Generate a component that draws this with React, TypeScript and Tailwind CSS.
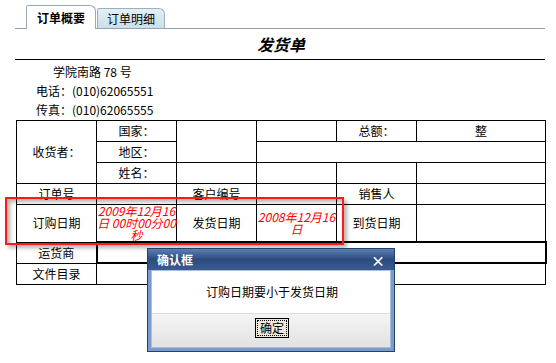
import React from "react";

const font = "font-['SimSun','Noto_Sans_CJK_SC',sans-serif]";

const Cell = ({
  children,
  className = "",
  colSpan,
  rowSpan,
}: {
  children?: React.ReactNode;
  className?: string;
  colSpan?: number;
  rowSpan?: number;
}) => (
  <td
    colSpan={colSpan}
    rowSpan={rowSpan}
    className={`border border-black text-center align-middle p-0 text-[12px] leading-[12px] ${className}`}
  >
    {children}
  </td>
);

const App = () => {
  return (
    <div
      className={`relative w-[556px] h-[363px] bg-white overflow-hidden text-black ${font}`}
    >
      {/* tabs */}
      <div className="ml-[15px] w-[530px] h-[29px] border-b border-[#8fa3b3] flex items-end pl-[11px] gap-[1px]">
        <div className="h-[24px] w-[70px] bg-white border border-b-0 border-[#9aa8b4] rounded-tr-[6px] rounded-tl-[2px] flex items-center justify-center text-[12px] font-bold -mb-[1px] relative">
          订单概要
        </div>
        <div className="h-[20px] w-[68px] bg-gradient-to-b from-[#e4f0f6] to-[#c9dfea] border border-b-0 border-[#9ab0bf] rounded-tr-[6px] rounded-tl-[2px] flex items-center justify-center text-[12px]">
          订单明细
        </div>
      </div>

      {/* title */}
      <div className="ml-[15px] w-[530px] h-[31px] border-b border-black flex items-center justify-center">
        <span className="text-[16px] font-bold italic pl-[2px]">发货单</span>
      </div>

      {/* address */}
      <div className="text-[12px] leading-[19px] pt-[1px]">
        <div className="pl-[53px] h-[20px] flex items-center">学院南路 78 号</div>
        <div className="pl-[36px] h-[19px] flex items-center">电话：(010)62065551</div>
        <div className="pl-[36px] h-[19px] flex items-center">传真：(010)62065555</div>
      </div>

      {/* table */}
      <table className="ml-[16px] mt-[1px] border-collapse table-fixed w-[529px]">
        <colgroup>
          <col className="w-[80px]" />
          <col className="w-[80px]" />
          <col className="w-[80px]" />
          <col className="w-[80px]" />
          <col className="w-[80px]" />
          <col className="w-[129px]" />
        </colgroup>
        <tbody>
          <tr className="h-[21px]">
            <Cell rowSpan={3}>收货者：</Cell>
            <Cell>国家：</Cell>
            <Cell rowSpan={2} />
            <Cell />
            <Cell>总额：</Cell>
            <Cell>整</Cell>
          </tr>
          <tr className="h-[21px]">
            <Cell>地区：</Cell>
            <Cell colSpan={3} />
          </tr>
          <tr className="h-[21px]">
            <Cell>姓名：</Cell>
            <Cell />
            <Cell />
            <Cell />
            <Cell />
          </tr>
          <tr className="h-[21px]">
            <Cell>订单号</Cell>
            <Cell />
            <Cell>客户编号</Cell>
            <Cell />
            <Cell>销售人</Cell>
            <Cell />
          </tr>
          <tr className="h-[37px]">
            <Cell>订购日期</Cell>
            <Cell className="text-[#ff0000] italic break-all">
              2009年12月16日 00时00分00秒
            </Cell>
            <Cell>发货日期</Cell>
            <Cell className="text-[#ff0000] italic break-all">2008年12月16日</Cell>
            <Cell>到货日期</Cell>
            <Cell />
          </tr>
          <tr className="h-[21px]">
            <Cell>运货商</Cell>
            <Cell colSpan={5} className="border-2" />
          </tr>
          <tr className="h-[21px]">
            <Cell>文件目录</Cell>
            <Cell colSpan={5} />
          </tr>
        </tbody>
      </table>

      {/* error highlight */}
      <div className="absolute left-[5px] top-[197px] w-[339px] h-[48px] border-2 border-[#ff1a1a] shadow-[3px_3px_4px_rgba(0,0,0,0.3),inset_3px_3px_4px_rgba(0,0,0,0.3)]" />

      {/* dialog */}
      <div className="absolute left-[147px] top-[248px] w-[248px] h-[104px] border border-[#23406c] bg-[#7a9bcb] flex flex-col">
        <div className="h-[21px] bg-gradient-to-b from-[#5b7fb3] via-[#2c4c7f] to-[#3a5c90] flex items-center justify-between px-[9px]">
          <span className="text-white text-[12px] font-bold">确认框</span>
          <span className="text-white text-[14px] font-bold leading-none">×</span>
        </div>
        <div className="flex-1 mx-[3px] mb-[3px] border border-[#a9bfdc] flex flex-col">
          <div className="h-[42px] bg-white flex items-center justify-center text-[12px] pl-[2px]">
            订购日期要小于发货日期
          </div>
          <div className="flex-1 border-t border-[#dcdcdc] bg-gradient-to-b from-[#f5f5f5] to-[#e2e2e2] flex items-start justify-center pt-[4px] pl-[2px]">
            <div className="w-[34px] h-[20px] border border-black bg-[#ece9d8] p-[1px]">
              <div className="w-full h-full border border-dotted border-black flex items-center justify-center text-[12px] leading-none">
                确定
              </div>
            </div>
          </div>
        </div>
      </div>
    </div>
  );
};

export default App;
